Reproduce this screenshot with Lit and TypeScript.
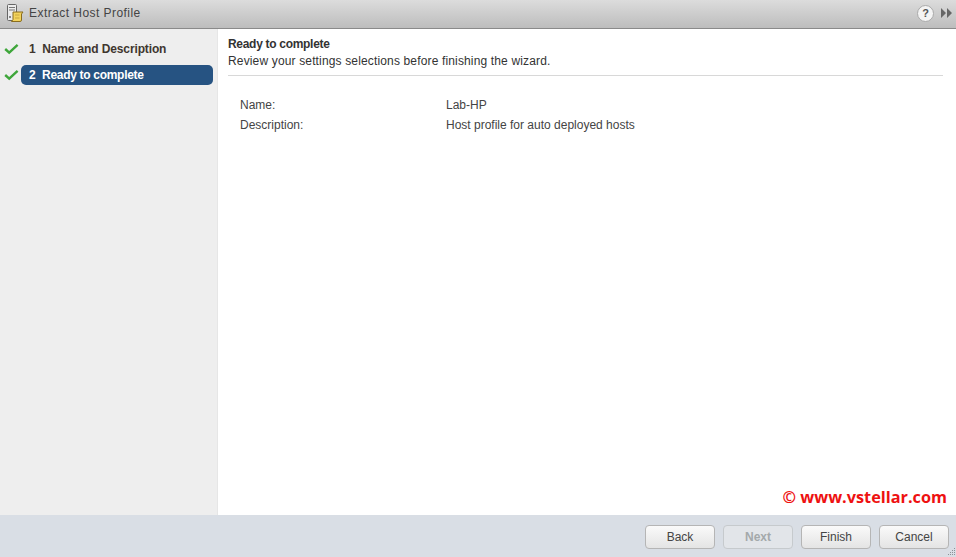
import { LitElement, html, css } from "lit";
import { customElement } from "lit/decorators.js";

const check = html`<svg class="chk" width="15" height="12" viewBox="0 0 15 12"><path d="M1.2 6 L5.2 9.6 L13.6 1.8" fill="none" stroke="#3ea63a" stroke-width="2.4"/></svg>`;

@customElement("app-root")
export class AppRoot extends LitElement {
  static styles = css`
    :host { display: flex; flex-direction: column; width: 956px; height: 557px; overflow: hidden; font-family: "Liberation Sans", Arial, sans-serif; font-size: 12px; color: #333; background: #fff; }
    .title { height: 28px; flex: none; border-bottom: 1px solid #8a8a8a; background: linear-gradient(#dcdcdc, #bdbdbd); display: flex; align-items: center; padding: 0 3px 2px 6px; box-sizing: content-box; height: 26px; }
    .title .t { margin-left: 5px; color: #444; letter-spacing: 0.45px; flex: 1; }
    .help { width: 15px; height: 15px; border-radius: 50%; background: #f4f4f4; border: 1px solid #aaa; color: #555; font-weight: 700; font-size: 11px; line-height: 15px; text-align: center; margin-right: 7px; }
    .main { flex: 1; display: flex; min-height: 0; position: relative; }
    .side { width: 217px; flex: none; background: #eee; border-right: 1px solid #e6e6e6; padding-top: 10px; }
    .step { display: flex; align-items: center; height: 20px; margin-bottom: 6px; }
    .chk { margin-left: 4px; flex: none; }
    .pill { margin-left: 2px; width: 192px; height: 20px; border-radius: 5px; display: flex; align-items: center; padding-left: 8px; box-sizing: border-box; font-weight: 700; color: #40362f; white-space: nowrap; letter-spacing: -0.13px; }
    .pill .n { width: 10px; }
    .pill.on { background: #265382; color: #fff; letter-spacing: -0.3px; }
    .content { flex: 1; padding: 8px 13px 0 10px; }
    .h { font-weight: 700; color: #333; line-height: 14px; letter-spacing: -0.3px; }
    .sub { margin-top: 3px; line-height: 14px; padding-bottom: 7px; border-bottom: 1px solid #d8d8d8; letter-spacing: 0.15px; }
    .rows { margin-top: 22px; padding-left: 12px; display: grid; grid-template-columns: 206px 1fr; row-gap: 6px; line-height: 14px; color: #444; }
    .mark { position: absolute; right: 9px; bottom: 8px; color: #ee1111; font-family: "Open Sans", "DejaVu Sans", sans-serif; font-weight: 700; font-size: 16.3px; line-height: 20px; }
    .foot { height: 42px; flex: none; background: #d9dee5; display: flex; justify-content: flex-end; align-items: center; gap: 8px; padding: 2px 7px 0 0; box-sizing: border-box; position: relative; }
    button { width: 70px; height: 24px; padding: 0; border: 1px solid #b5b5b5; border-radius: 4px; background: linear-gradient(#fafafa, #e4e4e4); font: 12px "Liberation Sans", Arial, sans-serif; color: #444; }
    button[disabled] { background: #e2e5e9; border-color: #c6cacd; color: #a4a9ab; font-weight: 700; }
    .grip { position: absolute; right: 0; bottom: 0; }
  `;

  render() {
    return html`
      <div class="title">
        <svg width="18" height="20" viewBox="0 0 18 20">
          <rect x="1.5" y="1.5" width="9" height="16" rx="1" fill="#ececec" stroke="#666"/>
          <path d="M3 4.5h6M3 7h6" stroke="#777"/>
          <circle cx="4" cy="14" r="1" fill="#666"/>
          <path d="M7 9h10l-1.5 2v6q0 1.5-1.5 1.5H5.5l1.5-2z" fill="#f3d35c" stroke="#8a6d1e" stroke-width="1"/>
          <path d="M9 12h4.500M9 15h4.500" stroke="#c9a73c"/>
        </svg>
        <span class="t">Extract Host Profile</span>
        <span class="help">?</span>
        <svg width="12" height="10" viewBox="0 0 12 10"><path d="M0 0l5 5-5 5zM6 0l5 5-5 5z" fill="#666"/></svg>
      </div>
      <div class="main">
        <div class="side">
          <div class="step">${check}<div class="pill"><span class="n">1</span>&nbsp;Name and Description</div></div>
          <div class="step">${check}<div class="pill on"><span class="n">2</span>&nbsp;Ready to complete</div></div>
        </div>
        <div class="content">
          <div class="h">Ready to complete</div>
          <div class="sub">Review your settings selections before finishing the wizard.</div>
          <div class="rows">
            <span>Name:</span><span>Lab-HP</span>
            <span>Description:</span><span>Host profile for auto deployed hosts</span>
          </div>
        </div>
        <div class="mark">© www.vstellar.com</div>
      </div>
      <div class="foot">
        <button>Back</button>
        <button disabled>Next</button>
        <button>Finish</button>
        <button>Cancel</button>
        <svg class="grip" width="10" height="10" viewBox="0 0 10 10" fill="#8c9298">
          <rect x="8" y="1" width="1" height="1"/><rect x="6" y="3" width="1" height="1"/><rect x="8" y="3" width="1" height="1"/>
          <rect x="4" y="5" width="1" height="1"/><rect x="6" y="5" width="1" height="1"/><rect x="8" y="5" width="1" height="1"/>
          <rect x="2" y="7" width="1" height="1"/><rect x="4" y="7" width="1" height="1"/><rect x="6" y="7" width="1" height="1"/><rect x="8" y="7" width="1" height="1"/>
        </svg>
      </div>
    `;
  }
}
